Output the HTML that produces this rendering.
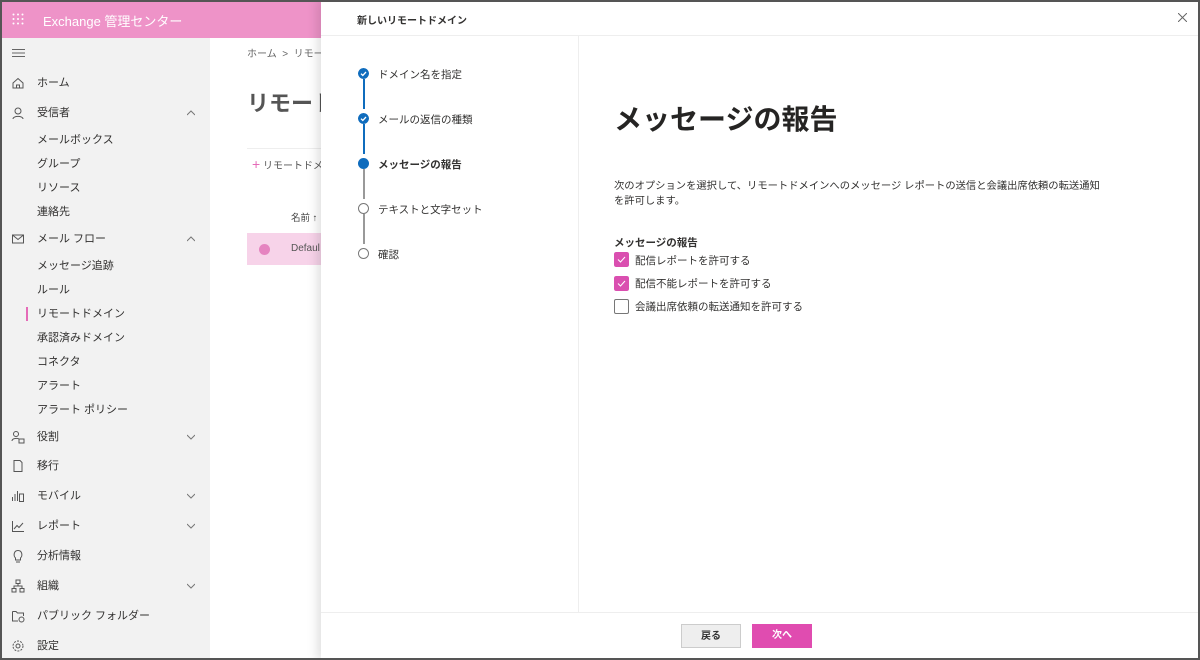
<!DOCTYPE html>
<html><head><meta charset="utf-8"><style>
*{margin:0;padding:0;box-sizing:border-box}
body{width:1200px;height:660px;overflow:hidden;font-family:"Liberation Sans","Noto Sans CJK JP",sans-serif;color:#323130;background:#fff;position:relative;white-space:nowrap}
.frame{position:absolute;left:0;top:0;width:1200px;height:660px;border:2px solid #555;z-index:50;pointer-events:none}
.hdr{position:absolute;left:0;top:0;width:1200px;height:38px;background:#ee93c8;color:#fff}
.hdr .t{position:absolute;left:43px;top:11px;font-size:13px}
.side{position:absolute;left:0;top:38px;width:210px;height:622px;background:#f2f2f2}
.it{position:absolute;left:37px;font-size:11px;color:#323130;line-height:14px}
.ic{position:absolute;left:11px;width:14px;height:14px}
.chev{position:absolute;left:187px;width:8px;height:8px}
.bar{position:absolute;left:26px;top:307px;width:2px;height:14px;background:#e56bb8}
.main{position:absolute;left:210px;top:38px;width:111px;height:622px;background:#fff;overflow:hidden}
.panel{position:absolute;left:321px;top:0;width:879px;height:660px;background:#fff;box-shadow:-4px 0 10px rgba(0,0,0,.12)}
.ptitle{position:absolute;left:36px;top:12px;font-size:10px;font-weight:bold}
.hl{position:absolute;left:0;top:35px;width:879px;height:1px;background:#eee}
.vl{position:absolute;left:257px;top:36px;width:1px;height:576px;background:#eee}
.fl{position:absolute;left:0;top:612px;width:879px;height:1px;background:#eee}
.step{position:absolute;left:57px;font-size:10.5px;color:#323130}
.dot{position:absolute;left:37px;width:11px;height:11px;border-radius:50%}
.line{position:absolute;left:42px;width:1.5px}
h1{position:absolute;left:293px;top:98px;font-size:28px;font-weight:bold;color:#252423}
.desc{position:absolute;left:293px;top:180px;font-size:10.5px;line-height:14.5px}
.lab{position:absolute;left:293px;top:235px;font-size:10.5px;font-weight:bold}
.cb{position:absolute;left:293px;width:15px;height:15px;border-radius:2px}
.cbt{position:absolute;left:314px;font-size:10.5px}
.btn{position:absolute;top:624px;width:60px;height:24px;font-size:10px;font-weight:bold;text-align:center;line-height:24px}
</style></head><body>
<div class="hdr">
<svg style="position:absolute;left:12px;top:13px" width="12" height="12" viewBox="0 0 12 12" fill="#fff"><circle cx="1.5" cy="1.5" r="1"/><circle cx="6" cy="1.5" r="1"/><circle cx="10.5" cy="1.5" r="1"/><circle cx="1.5" cy="6" r="1"/><circle cx="6" cy="6" r="1"/><circle cx="10.5" cy="6" r="1"/><circle cx="1.5" cy="10.5" r="1"/><circle cx="6" cy="10.5" r="1"/><circle cx="10.5" cy="10.5" r="1"/></svg>
<div class="t">Exchange 管理センター</div></div>
<div class="side">
<svg style="position:absolute;left:12px;top:10px" width="13" height="10" stroke="#666" stroke-width="1"><path d="M0 1.5H13M0 5H13M0 8.5H13"/></svg>
</div>
<div style="position:absolute;left:0;top:0;width:210px;height:660px">
<svg class="ic" style="top:76px" viewBox="0 0 14 14" fill="none" stroke="#555"><path d="M2 7L7 2.5L12 7V12H2Z M5.5 12V9H8.5V12"/></svg>
<div class="it" style="top:76px">ホーム</div>
<svg class="ic" style="top:106px" viewBox="0 0 14 14" fill="none" stroke="#555"><circle cx="7" cy="5" r="3"/><path d="M2 13C2 9.5 12 9.5 12 13"/></svg>
<div class="it" style="top:106px">受信者</div>
<svg class="chev" style="top:109px" viewBox="0 0 8 8" fill="none" stroke="#777"><path d="M0 6L4 2L8 6"/></svg>
<div class="it" style="top:133px">メールボックス</div>
<div class="it" style="top:157px">グループ</div>
<div class="it" style="top:181px">リソース</div>
<div class="it" style="top:205px">連絡先</div>
<svg class="ic" style="top:232px" viewBox="0 0 14 14" fill="none" stroke="#555"><rect x="1.5" y="3" width="11" height="8"/><path d="M1.5 3L7 7.5L12.5 3"/></svg>
<div class="it" style="top:232px">メール フロー</div>
<svg class="chev" style="top:235px" viewBox="0 0 8 8" fill="none" stroke="#777"><path d="M0 6L4 2L8 6"/></svg>
<div class="it" style="top:259px">メッセージ追跡</div>
<div class="it" style="top:283px">ルール</div>
<div class="bar"></div>
<div class="it" style="top:307px">リモートドメイン</div>
<div class="it" style="top:331px">承認済みドメイン</div>
<div class="it" style="top:355px">コネクタ</div>
<div class="it" style="top:379px">アラート</div>
<div class="it" style="top:403px">アラート ポリシー</div>
<svg class="ic" style="top:430px" viewBox="0 0 14 14" fill="none" stroke="#555"><circle cx="5" cy="4" r="2.5"/><path d="M1 11C1 8 7 8 8 9"/><rect x="8" y="9" width="5" height="4"/></svg>
<div class="it" style="top:430px">役割</div>
<svg class="chev" style="top:433px" viewBox="0 0 8 8" fill="none" stroke="#777"><path d="M0 2L4 6L8 2"/></svg>
<svg class="ic" style="top:459px" viewBox="0 0 14 14" fill="none" stroke="#555"><path d="M3 1.5H9L11 3.5V12.5H3Z"/></svg>
<div class="it" style="top:459px">移行</div>
<svg class="ic" style="top:489px" viewBox="0 0 14 14" fill="none" stroke="#555"><path d="M1.5 12V8M4 12V5M6.5 12V2"/><rect x="8.5" y="5" width="4" height="7.5"/></svg>
<div class="it" style="top:489px">モバイル</div>
<svg class="chev" style="top:492px" viewBox="0 0 8 8" fill="none" stroke="#777"><path d="M0 2L4 6L8 2"/></svg>
<svg class="ic" style="top:519px" viewBox="0 0 14 14" fill="none" stroke="#555"><path d="M1.5 2V12.5H13M3 10L6 6.5L8 8.5L12 4"/></svg>
<div class="it" style="top:519px">レポート</div>
<svg class="chev" style="top:522px" viewBox="0 0 8 8" fill="none" stroke="#777"><path d="M0 2L4 6L8 2"/></svg>
<svg class="ic" style="top:549px" viewBox="0 0 14 14" fill="none" stroke="#555"><path d="M4.5 9C2 6.5 3 1.5 7 1.5S12 6.5 9.5 9V11H4.5Z M5 13H9"/></svg>
<div class="it" style="top:549px">分析情報</div>
<svg class="ic" style="top:579px" viewBox="0 0 14 14" fill="none" stroke="#555"><rect x="5" y="1" width="4" height="3.5"/><rect x="1" y="9.5" width="4" height="3.5"/><rect x="9" y="9.5" width="4" height="3.5"/><path d="M7 4.5V7M3 9.5V7H11V9.5"/></svg>
<div class="it" style="top:579px">組織</div>
<svg class="chev" style="top:582px" viewBox="0 0 8 8" fill="none" stroke="#777"><path d="M0 2L4 6L8 2"/></svg>
<svg class="ic" style="top:609px" viewBox="0 0 14 14" fill="none" stroke="#555"><path d="M1.5 2.5H5L6.5 4H12.5V7M1.5 2.5V12H7"/><circle cx="10.5" cy="10.5" r="2.5"/></svg>
<div class="it" style="top:609px">パブリック フォルダー</div>
<svg class="ic" style="top:639px" viewBox="0 0 14 14" fill="none" stroke="#555"><circle cx="7" cy="7" r="2"/><circle cx="7" cy="7" r="5" stroke-dasharray="2 1.2"/></svg>
<div class="it" style="top:639px">設定</div>
</div>
<div class="main">
<div style="position:absolute;left:37px;top:7px;font-size:10px;color:#666">ホーム &nbsp;&gt;&nbsp; リモー</div>
<div style="position:absolute;left:37px;top:48px;font-size:22px;font-weight:bold;color:#555">リモート</div>
<div style="position:absolute;left:37px;top:110px;width:80px;height:1px;background:#eee"></div>
<div style="position:absolute;left:42px;top:118px;font-size:10px;color:#555"><span style="color:#e56bb8;font-size:14px">+</span> リモートドメ</div>
<div style="position:absolute;left:81px;top:172px;font-size:9.5px;color:#444">名前 ↑</div>
<div style="position:absolute;left:37px;top:195px;width:80px;height:32px;background:#f7d3e9"></div>
<div style="position:absolute;left:49px;top:206px;width:11px;height:11px;border-radius:50%;background:#e584c0"></div>
<div style="position:absolute;left:81px;top:205px;font-size:10px;color:#555">Defaul</div>
</div>
<div class="panel">
<div class="ptitle">新しいリモートドメイン</div>
<svg style="position:absolute;left:857px;top:13px" width="9" height="9" stroke="#666" stroke-width="1"><path d="M0 0L9 9M9 0L0 9"/></svg>
<div class="hl"></div><div class="vl"></div><div class="fl"></div>
<div class="line" style="top:79px;height:30px;background:#0f6cbd"></div>
<div class="line" style="top:124px;height:30px;background:#0f6cbd"></div>
<div class="line" style="top:169px;height:30px;background:#999"></div>
<div class="line" style="top:214px;height:30px;background:#999"></div>
<svg class="dot" style="top:68px" viewBox="0 0 11 11"><circle cx="5.5" cy="5.5" r="5.5" fill="#0f6cbd"/><path d="M3 5.7L4.8 7.4L8 4" stroke="#fff" stroke-width="1.3" fill="none"/></svg>
<div class="step" style="top:67px">ドメイン名を指定</div>
<svg class="dot" style="top:113px" viewBox="0 0 11 11"><circle cx="5.5" cy="5.5" r="5.5" fill="#0f6cbd"/><path d="M3 5.7L4.8 7.4L8 4" stroke="#fff" stroke-width="1.3" fill="none"/></svg>
<div class="step" style="top:112px">メールの返信の種類</div>
<div class="dot" style="top:158px;background:#0f6cbd"></div>
<div class="step" style="top:157px;font-weight:bold">メッセージの報告</div>
<div class="dot" style="top:203px;border:1.2px solid #777;background:#fff"></div>
<div class="step" style="top:202px">テキストと文字セット</div>
<div class="dot" style="top:248px;border:1.2px solid #777;background:#fff"></div>
<div class="step" style="top:247px">確認</div>
<h1>メッセージの報告</h1>
<div class="desc" style="font-size:10.3px">次のオプションを選択して、リモートドメインへのメッセージ レポートの送信と会議出席依頼の転送通知<br>を許可します。</div>
<div class="lab">メッセージの報告</div>
<svg class="cb" style="top:252px" viewBox="0 0 15 15"><rect width="15" height="15" rx="2" fill="#da4fb0"/><path d="M4 7.5L6.5 10L11 5" stroke="#fff" stroke-width="1" fill="none"/></svg>
<div class="cbt" style="top:253px">配信レポートを許可する</div>
<svg class="cb" style="top:276px" viewBox="0 0 15 15"><rect width="15" height="15" rx="2" fill="#da4fb0"/><path d="M4 7.5L6.5 10L11 5" stroke="#fff" stroke-width="1" fill="none"/></svg>
<div class="cbt" style="top:276px">配信不能レポートを許可する</div>
<div class="cb" style="top:299px;border:1px solid #777;background:#fff"></div>
<div class="cbt" style="top:299px">会議出席依頼の転送通知を許可する</div>
<div class="btn" style="left:360px;background:#eee;border:1px solid #ccc;color:#333">戻る</div>
<div class="btn" style="left:431px;background:#e04cb0;color:#fff">次へ</div>
</div>
<div class="frame"></div>
</body></html>
